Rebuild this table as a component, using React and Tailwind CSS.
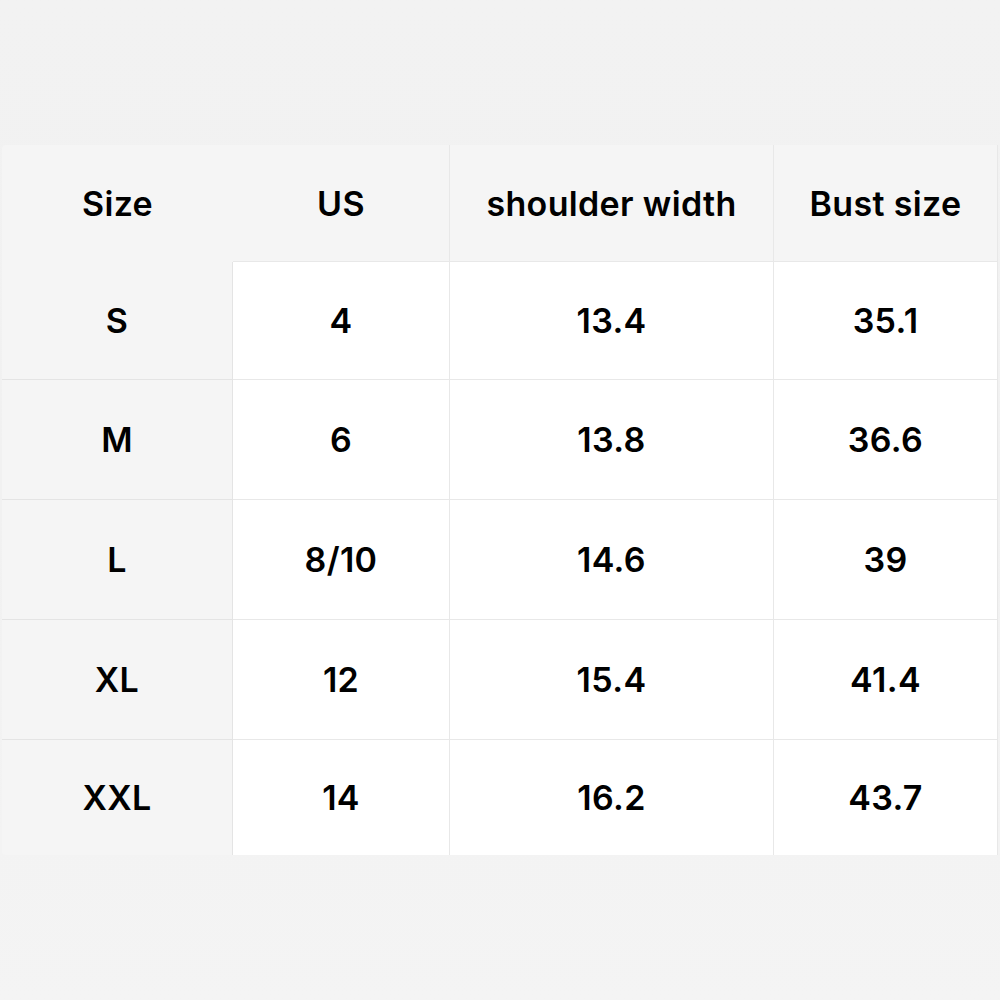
const headers = ["Size", "US", "shoulder width", "Bust size"];

const rows = [
  ["S", "4", "13.4", "35.1"],
  ["M", "6", "13.8", "36.6"],
  ["L", "8/10", "14.6", "39"],
  ["XL", "12", "15.4", "41.4"],
  ["XXL", "14", "16.2", "43.7"],
];

const rowHeights = ["h-[118px]", "h-[120px]", "h-[120px]", "h-[120px]", "h-[115px]"];

export default function App() {
  return (
    <div
      className="min-h-[1000px] w-[1000px] bg-gradient-to-b from-[#f2f2f2] via-[#f1f1f1] to-[#f4f4f4] pt-[145px] pl-[2px] text-black"
      style={{ fontFamily: "Inter, 'Noto Sans', sans-serif" }}
    >
      <div className="grid w-[996px] grid-cols-[231px_217px_324px_224px] overflow-hidden rounded-tl-[4px] rounded-bl-[4px] text-[34px] font-semibold tracking-[0.01em]">
        {headers.map((h, i) => (
          <div
            key={h}
            className={
              "flex h-[117px] items-center justify-center bg-[#f5f5f5] " +
              (i === 0 ? "" : "border-b border-[#e6e6e6] ") +
              (i >= 1 ? "border-r border-[#e8e8e8]" : "")
            }
          >
            {h}
          </div>
        ))}
        {rows.map((r, ri) =>
          r.map((c, ci) => (
            <div
              key={ri + "-" + ci}
              className={
                "flex items-center justify-center border-r " +
                rowHeights[ri] +
                " " +
                (ci === 0 ? "bg-[#f5f5f5] border-[#e4e4e4] " : "bg-white border-[#e8e8e8] ") +
                (ri < rows.length - 1 ? "border-b" : "")
              }
            >
              {c}
            </div>
          ))
        )}
      </div>
    </div>
  );
}
